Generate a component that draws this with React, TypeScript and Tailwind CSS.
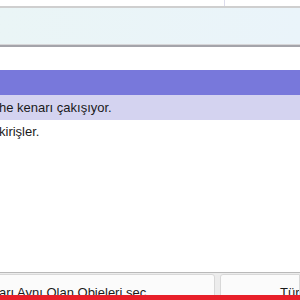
import React from 'react';

// Satır metinleri (pencere sola kaydırılmış, başları kesik görünüyor)
const rows = [
  { text: 'he kenarı çakışıyor.', selected: true },
  { text: 'kirişler.', selected: false },
];

const App: React.FC = () => {
  return (
    <div
      className="w-[300px] h-[300px] overflow-hidden bg-white flex flex-col text-[13px] text-[#1a1a1a]"
      style={{ fontFamily: '"Liberation Sans", Arial, sans-serif' }}
    >
      {/* üst sekme şeridi */}
      <div className="h-[6px] flex shrink-0">
        <div className="w-[225px] border-r border-[#dcdcec]" />
        <div className="flex-1" />
      </div>
      <div className="h-[2px] bg-[#cfcfcf] shrink-0" />

      {/* bilgi paneli */}
      <div className="h-[36px] bg-gradient-to-r from-[#eaf5f6] to-[#eaf4fa] shrink-0" />
      <div className="h-[1px] bg-[#d6d6d8] shrink-0" />
      <div className="h-[2px] bg-[#a4a4aa] shrink-0" />

      <div className="h-[23px] shrink-0" />

      {/* liste başlığı */}
      <div className="h-[25px] bg-[#7878db] shrink-0" />

      {/* liste satırları */}
      {rows.map((row, i) => (
        <div
          key={i}
          className={`flex items-center whitespace-nowrap shrink-0 ${
            row.selected ? 'h-[25px] bg-[#d4d3f0]' : 'h-[22px] bg-white'
          }`}
        >
          <span className="-ml-[1px] pt-[1px]">{row.text}</span>
        </div>
      ))}

      <div className="flex-1" />

      {/* alt butonlar */}
      <div className="h-[1px] bg-[#b9b9b9] shrink-0" />
      <div className="relative h-[27px] bg-[#ececec] flex gap-[5px] pt-[1px] shrink-0">
        <div className="w-[216px] -ml-[1px] bg-[#fbfbfb] border border-[#d8d8d8] rounded-r-[3px] whitespace-nowrap overflow-hidden pt-[8px]">
          <span className="-ml-[1px]">arı Aynı Olan Objeleri seç</span>
        </div>
        <div className="flex-1 bg-[#fbfbfb] border border-[#d8d8d8] rounded-l-[3px] whitespace-nowrap overflow-hidden pt-[8px] pl-[59px]">
          <span>Türü</span>
        </div>
        {/* kırmızı alt çizgi */}
        <div className="absolute left-0 right-0 bottom-0 h-[5px] bg-[#e8202a]" />
      </div>
    </div>
  );
};

export default App;
